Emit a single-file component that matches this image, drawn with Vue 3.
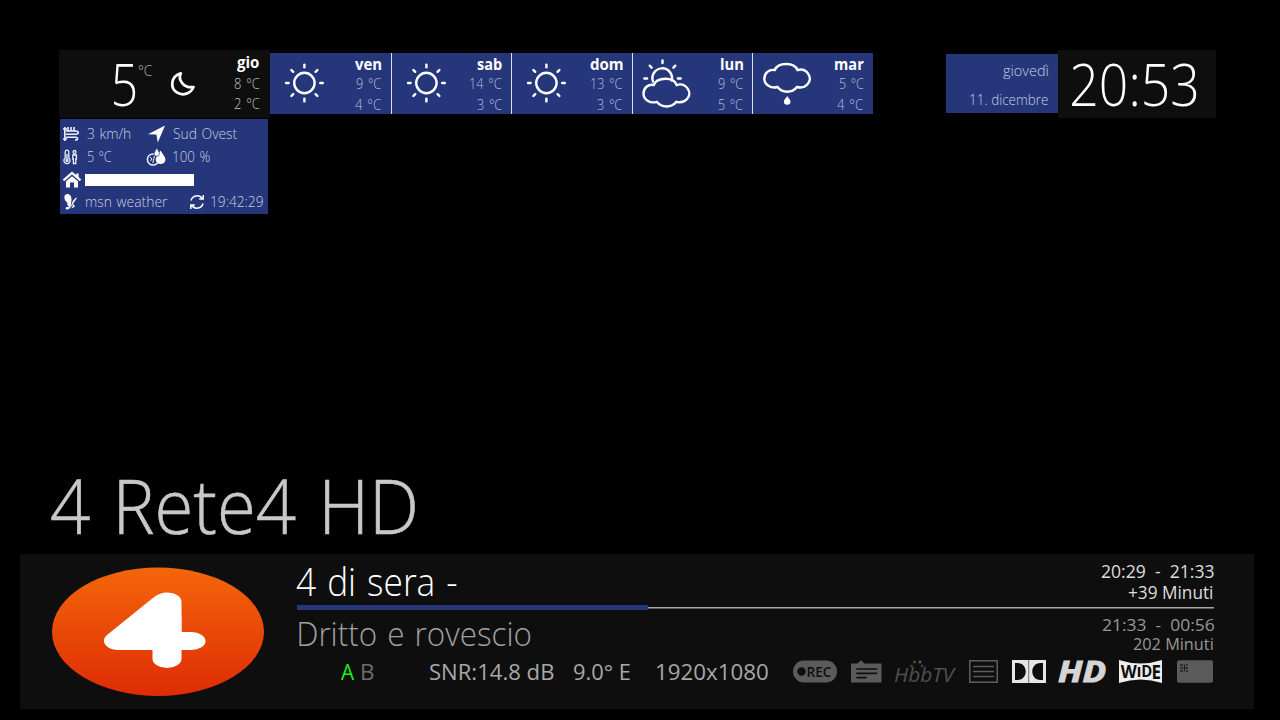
<script setup>
// Stretches a line of text so that its ink is exactly `value` pixels wide.
const ctx = document.createElement('canvas').getContext('2d')
const vFit = {
  mounted(el, { value }) {
    const cs = getComputedStyle(el)
    ctx.font = `${cs.fontStyle} ${cs.fontWeight} ${cs.fontSize} ${cs.fontFamily}`
    ctx.wordSpacing = cs.wordSpacing
    const m = ctx.measureText(el.textContent)
    const scale = value / (m.actualBoundingBoxLeft + m.actualBoundingBoxRight)
    el.style.marginRight = `${value - el.getBoundingClientRect().width}px`
    el.style.transform = `translateX(${m.actualBoundingBoxLeft * scale}px) scaleX(${scale})`
  },
}

const days = [
  { name: 'ven', nw: 26.5, hi: '9 °C', hw: 25.5, lo: '4 °C', lw: 26.5, icon: 'sun' },
  { name: 'sab', nw: 25, hi: '14 °C', hw: 32, lo: '3 °C', lw: 25.5, icon: 'sun' },
  { name: 'dom', nw: 33, hi: '13 °C', hw: 31.5, lo: '3 °C', lw: 25.5, icon: 'sun' },
  { name: 'lun', nw: 22.5, hi: '9 °C', hw: 25.5, lo: '5 °C', lw: 25, icon: 'partly' },
  { name: 'mar', nw: 28.5, hi: '5 °C', hw: 25, lo: '4 °C', lw: 26.5, icon: 'rain' },
]
const rays = [0, 45, 90, 135, 180, 225, 270, 315]
const halfRays = [180, 225, 270, 315, 360]
</script>

<template>
  <main class="screen">
    <header class="top">
      <section class="weather">
        <div class="today">
          <span v-fit="21.5" class="now">5</span>
          <span v-fit="14" class="unit">°C</span>
          <svg class="moon" width="26" height="26" viewBox="0 0 26 26">
            <path d="M10.8 2.3C7.5 9 14 17.6 23.5 16C20.8 22.6 13 25.2 7.2 21.7C-.6 17 1 5.2 10.8 2.3Z" fill="none" stroke="#fff" stroke-width="2.7" stroke-linejoin="round" />
          </svg>
          <div class="temps">
            <span v-fit="22.5" class="day gio">gio</span>
            <span v-fit="26">8 °C</span>
            <span v-fit="26">2 °C</span>
          </div>
        </div>
        <div class="details">
          <div class="row r1">
            <svg width="20" height="18" viewBox="0 0 20 18" fill="none" stroke="#eef" stroke-width="1.6">
              <path d="M2.8 2V16M1 4H5M1 14H5M6 5.5V2M9 5.5V2M12 5.5V2M4 6H13.5C17 6 17 9.2 14 9.2M4 9.2H15M4 12.2H13.5C16.5 12.2 16 15.5 13 15" />
            </svg>
            <span v-fit="44" class="c1">3 km/h</span>
            <svg class="arrow" width="18" height="18" viewBox="0 0 18 18"><path d="M17 .5L0 9.2L8.4 9.6L9.8 17.5Z" fill="#fff" /></svg>
            <span v-fit="64.5" class="c2">Sud Ovest</span>
          </div>
          <div class="row r2">
            <svg width="20" height="16" viewBox="0 0 20 16" fill="none" stroke="#eef" stroke-width="1.3">
              <path d="M3.2 9V3A1.8 1.8 0 0 1 6.8 3V9A3.1 3.1 0 1 1 3.2 9ZM5 5V11" /><circle cx="5" cy="11.5" r="1" />
              <circle cx="12.5" cy="3" r="1.5" /><path d="M10.8 6H14.4V10H13.8V14.5H11.4V10H10.8Z" />
            </svg>
            <span v-fit="25" class="c1">5 °C</span>
            <svg class="humid" width="21" height="18" viewBox="0 0 21 18">
              <circle cx="7" cy="11.5" r="5.6" fill="none" stroke="#eef" stroke-width="1.5" />
              <path d="M4 9L6 11L4.5 13M8.5 8L6.8 15" stroke="#eef" fill="none" />
              <path d="M14.5 2.5C17 6.5 19.5 9 19.5 12A5 5 0 0 1 9.7 12C9.7 9.5 12.5 6 14.5 2.5Z" fill="#fff" />
              <path d="M10.8 0C12 2.3 13.4 3.8 13.4 5.7A2.6 2.6 0 0 1 8.2 5.7C8.2 3.8 9.7 2.3 10.8 0Z" fill="#fff" stroke="#25367a" stroke-width=".7" />
            </svg>
            <span v-fit="37" class="c2">100 %</span>
          </div>
          <div class="row r3">
            <svg width="20" height="18" viewBox="0 0 20 18">
              <path d="M1.5 9.3L10 2L18.5 9.3" fill="none" stroke="#fff" stroke-width="2.2" />
              <path d="M14.2 2.5H16.6V7L14.2 5ZM10 5.2L16 10.3V16.5H12V11.5H8V16.5H4V10.3Z" fill="#fff" />
            </svg>
            <i class="mask"></i>
          </div>
          <div class="row r4">
            <svg width="20" height="18" viewBox="0 0 20 18" fill="#fff">
              <path d="M3 2C6-.5 9.8 2 9.5 7L8.5 14C5.5 14 5 11.5 5.4 9.5C3 8.5 1.5 4.5 3 2Z" />
              <path d="M15 5L10 12.5C8 15.5 6.5 17 4.5 16.5C3 16 3.5 14 5 14L8 14.2M9.5 15.5L11.5 11L13 13.5Z" />
              <path d="M14.8 5C12 6 10.5 8.5 9.7 12.3" stroke="#fff" fill="#fff" />
            </svg>
            <span v-fit="82" class="c0">msn weather</span>
            <svg class="sync" width="16" height="16" viewBox="0 0 16 16" fill="none" stroke="#fff" stroke-width="1.5">
              <path d="M2 6.5A6.2 6.2 0 0 1 13.2 4.6M14 9.5A6.2 6.2 0 0 1 2.8 11.4M14.2 1V5H10.2M1.8 15V11H5.8" />
            </svg>
            <span v-fit="52.5" class="time">19:42:29</span>
          </div>
        </div>
      </section>

      <section class="forecast">
        <div v-for="d in days" :key="d.name" class="cell">
          <svg width="62" height="61" viewBox="0 0 62 61" fill="none" stroke="#fff" stroke-linecap="round">
            <g v-if="d.icon === 'sun'" stroke-width="2.4">
              <circle cx="34.4" cy="30" r="10.2" />
              <path v-for="a in rays" :key="a" d="M15.8 0H18.4" :transform="`translate(34.4 30) rotate(${a})`" />
            </g>
            <g v-else-if="d.icon === 'partly'" stroke-width="2.4">
              <path d="M20 28.5A9.8 9.8 0 1 1 38.7 27.5" />
              <path v-for="a in halfRays" :key="a" d="M15.4 0H18.1" :transform="`translate(29.5 25.5) rotate(${a})`" />
              <path d="M20.7 32C24 24 40.5 23.5 43.7 32C53.2 29 60 40 54 46C51.5 49 47.5 49.8 43.5 48.8C38.5 55 28.7 55 23.7 48.8C17.2 51 10.3 46.5 10.5 40.5C10.5 34.8 15.2 31 20.7 32Z" />
            </g>
            <g v-else stroke-width="2.4">
              <path d="M21.8 17C25 9.3 41 8.8 44.5 17C54 14.5 60.3 25 54.5 31.3C52 34.2 48 35 44 34C39 40.3 29.5 40.3 24.5 34C18 36 11.3 31.5 11.3 25.7C11.3 20 16 16 21.8 17Z" />
              <path d="M34.2 43C35.7 45.5 37.5 46.8 37.5 48.5A3.3 3.3 0 0 1 30.9 48.5C30.9 46.8 32.7 45.5 34.2 43Z" fill="#fff" stroke="none" />
            </g>
          </svg>
          <div class="temps">
            <span v-fit="d.nw" class="day">{{ d.name }}</span>
            <span v-fit="d.hw">{{ d.hi }}</span>
            <span v-fit="d.lw">{{ d.lo }}</span>
          </div>
        </div>
      </section>

      <section class="date">
        <span v-fit="45.5">giovedì</span>
        <span v-fit="78.5">11. dicembre</span>
      </section>
      <section class="clock"><span v-fit="125">20:53</span></section>
    </header>

    <h1 class="channel"><span v-fit="364">4 Rete4 HD</span></h1>

    <section class="panel">
      <svg class="logo" width="214" height="130" viewBox="0 0 214 130">
        <defs>
          <linearGradient id="orange" x1="0" y1="0" x2="0" y2="1">
            <stop offset="0" stop-color="#f4660a" />
            <stop offset="1" stop-color="#de2c05" />
          </linearGradient>
        </defs>
        <ellipse cx="107" cy="64.7" rx="106" ry="64.2" fill="url(#orange)" />
        <rect x="101.5" y="40" width="29" height="61" rx="14.5" ry="9.5" fill="#fff" />
        <rect x="70" y="65" width="84.5" height="18" rx="14" ry="9" fill="#fff" />
        <path d="M56 68L102.5 30.5Q109 25.5 116 25.5C124 25.5 130.5 29.5 130.5 35V83H68C54.5 83 49 74 56 68Z" fill="#fff" />
      </svg>

      <div class="epg">
        <div class="line current">
          <span v-fit="160.5" class="title">4 di sera -</span>
          <div class="times">
            <span v-fit="112.5">20:29&nbsp; -&nbsp; 21:33</span>
            <span v-fit="85" class="in">+39 Minuti</span>
          </div>
        </div>
        <div class="progress"><i></i></div>
        <div class="line next">
          <span v-fit="231.5" class="title">Dritto e rovescio</span>
          <div class="times">
            <span v-fit="112">21:33&nbsp; -&nbsp; 00:56</span>
            <span v-fit="79.5" class="in">202 Minuti</span>
          </div>
        </div>
        <div class="status">
          <span v-fit="13.5" class="a">A</span>
          <span v-fit="11.5" class="b">B</span>
          <span v-fit="123.5" class="snr">SNR:14.8 dB</span>
          <span v-fit="56" class="orb">9.0° E</span>
          <span v-fit="112.5" class="res">1920x1080</span>

          <svg class="rec" width="44" height="23" viewBox="0 0 44 23">
            <rect y=".5" width="44" height="22" rx="11" fill="#5b5b5b" />
            <circle cx="8.5" cy="11.5" r="4.2" fill="#0e0e0e" />
            <text x="13.5" y="17" font-size="15" textLength="25" lengthAdjust="spacingAndGlyphs" fill="#0e0e0e" font-weight="600">REC</text>
          </svg>
          <svg class="note" width="31" height="23" viewBox="0 0 31 23">
            <path d="M0 3.5H6.5L10 .2L13.5 3.5H30.5V22.5H0Z" fill="#5b5b5b" />
            <path d="M6 9H25.5M6 13.3H25.5M6 17.6H15" stroke="#0e0e0e" stroke-width="1.7" stroke-linecap="round" />
          </svg>
          <svg class="hbb" width="62" height="24" viewBox="0 0 62 24">
            <text x="0" y="21.5" font-size="20" font-style="italic" font-weight="500" textLength="60" lengthAdjust="spacingAndGlyphs" fill="#505050">HbbTV</text>
            <circle cx="20.5" cy="2" r="1.5" fill="#315b38" /><circle cx="26" cy="2" r="1.5" fill="#6b622b" />
            <circle cx="17.5" cy="6" r="1.5" fill="#6b2c28" /><circle cx="28" cy="6" r="1.5" fill="#303c68" />
          </svg>
          <svg class="list" width="29" height="23" viewBox="0 0 29 23" fill="none" stroke="#5b5b5b">
            <rect x=".8" y=".8" width="27.4" height="21.4" stroke-width="1.6" />
            <path d="M4 6.5H25M4 11.5H25M4 16.5H25" stroke-width="1.6" />
          </svg>
          <svg class="dolby" width="34" height="23" viewBox="0 0 34 23">
            <rect width="34" height="23" fill="#e6e6e6" />
            <path d="M3 3H5.5C16.5 3 16.5 20 5.5 20H3ZM31 3H28.5C17.5 3 17.5 20 28.5 20H31Z" fill="#0e0e0e" />
            <path d="M16.7 0V23" stroke="#555" stroke-width=".8" />
          </svg>
          <svg class="hd" width="49" height="23" viewBox="0 0 49 23">
            <text x="0" y="21.7" font-size="28" font-style="italic" font-weight="700" textLength="48" lengthAdjust="spacingAndGlyphs" fill="#d5d5d5" stroke="#d5d5d5" stroke-width="1">HD</text>
          </svg>
          <svg class="wide" width="43" height="23" viewBox="0 0 43 23">
            <path d="M0 0Q21.5 7 43 0V23Q21.5 16 0 23Z" fill="#eee" />
            <g fill="#0e0e0e" font-weight="700">
              <text x="1.7" y="17.7" font-size="17" textLength="16" lengthAdjust="spacingAndGlyphs">W</text>
              <text x="17.5" y="17" font-size="15" textLength="5" lengthAdjust="spacingAndGlyphs">I</text>
              <text x="22.3" y="17.3" font-size="15.5" textLength="11" lengthAdjust="spacingAndGlyphs">D</text>
              <text x="32.5" y="18.7" font-size="19" textLength="9.5" lengthAdjust="spacingAndGlyphs">E</text>
            </g>
          </svg>
          <svg class="card" width="36" height="23" viewBox="0 0 36 23">
            <rect y=".3" width="36" height="22.4" rx="2" fill="#5b5b5b" />
            <path d="M3 5H6M3 8H6M3 11H6M7.5 4.2V11.5M8 8H11M9 4.8H11M9 11H11" stroke="#222" stroke-width="1.3" />
          </svg>
        </div>
      </div>
    </section>
  </main>
</template>

<style scoped>
.screen {
  width: 1280px;
  height: 720px;
  overflow: hidden;
  background: #000;
  color: #fff;
  font-family: "Open Sans", "Noto Sans", sans-serif;
  font-weight: 300;
}
span {
  display: inline-block;
  flex: none;
  white-space: pre;
  transform-origin: 0 50%;
}
svg { display: block; flex: none; overflow: visible; }
.top {
  display: flex;
  box-sizing: border-box;
  align-items: flex-start;
  height: 460px;
  padding: 50px 64px 0 59px;
}
.weather { width: 211px; flex: none; }
.today {
  display: flex;
  height: 68px;
  background: #0e0e0e;
}
.now { margin-left: 55px; font-size: 58px; line-height: 68px; }
.unit { margin-left: 2.5px; font-size: 15px; line-height: 40px; color: #bbb; }
.moon { margin: 21px 0 0 17.5px; }
.temps {
  display: flex;
  flex-direction: column;
  align-items: flex-end;
  margin-left: auto;
  font-size: 14px;
  line-height: 20.5px;
  word-spacing: 1.5px;
  color: #c2c2c6;
}
.today .temps { padding: 1px 10.5px 0 0; }
.day { font-size: 16px; font-weight: 700; color: #fff; }
.today .gio { line-height: 22.5px; }
.details {
  width: 207.5px;
  height: 95.5px;
  margin: 0.5px 0 0 1px;
  padding: 4.2px 0 0 3px;
  box-sizing: border-box;
  background: #25367a;
  font-size: 14px;
  word-spacing: 1px;
  color: #c8cce0;
}
.row { display: flex; align-items: center; height: 23px; line-height: 26px; }
.row svg:first-child { margin-left: -1px; }
.r3 { height: 22px; }
.c1 { margin-left: 4.5px; }
.c0 { margin-left: 4px; }
.arrow { margin-left: 17px; }
.c2 { margin-left: 7px; }
.humid { margin-left: 34px; }
.r2 .c2 { margin-left: 6px; }
.mask { width: 109.5px; height: 12px; margin: 1px 0 0 2.5px; background: #fff; }
.sync { margin-left: 20.5px; }
.time { margin-left: 6px; }
.forecast { display: flex; margin-top: 3px; }
.cell {
  display: flex;
  width: 120.6px;
  height: 61px;
  box-sizing: border-box;
  background: #25367a;
}
.cell + .cell { border-left: 1px solid #dfe1ec; }
.cell .temps { padding: 0.6px 9px 0 0; color: #b9bfd8; }
.date {
  display: flex;
  flex-direction: column;
  align-items: flex-end;
  width: 112px;
  height: 59px;
  box-sizing: border-box;
  margin: 4px 0 0 auto;
  padding: 2px 9.5px 0 0;
  background: #25367a;
  font-size: 14.5px;
  line-height: 29px;
  color: #c8cce0;
}
.clock {
  display: flex;
  width: 158px;
  height: 68px;
  box-sizing: border-box;
  padding-left: 14px;
  background: #0e0e0e;
  font-size: 58px;
  line-height: 68px;
}
.channel {
  display: flex;
  height: 94px;
  margin: 0;
  padding-left: 50.5px;
  font-size: 75.5px;
  font-weight: 300;
  word-spacing: 4px;
  line-height: 89px;
  color: #c8c8c8;
  -webkit-text-stroke: 0.6px #c8c8c8;
}
.panel {
  display: flex;
  width: 1234px;
  height: 155px;
  margin-left: 20px;
  background: #0e0e0e;
}
.logo { margin: 13px 0 0 31px; }
.epg { width: 917px; margin-left: 31.5px; padding-top: 5px; }
.line { display: flex; justify-content: space-between; }
.current { height: 46px; }
.current .title { margin-left: -0.5px; font-size: 38px; line-height: 45px; word-spacing: 2px; }
.times { display: flex; flex-direction: column; align-items: flex-end; }
.current .times { padding-top: 1.5px; font-size: 17.5px; line-height: 21px; font-weight: 400; color: #ddd; }
.times .in { translate: -1px 0; }
.progress {
  display: flex;
  align-items: center;
  height: 5px;
  background: linear-gradient(#a8a8a8, #a8a8a8) 0 50% / 100% 1.5px no-repeat;
}
.progress i { width: 351.5px; height: 5px; background: #25367a; }
.next { height: 40px; margin-top: 3px; color: #a0a0a0; }
.next .title { margin-left: 2px; font-size: 33.5px; line-height: 41px; word-spacing: 2px; }
.next .times { padding-top: 1.5px; font-size: 17px; line-height: 19.5px; font-weight: 400; color: #989898; }
.status {
  display: flex;
  margin-top: 5px;
  font-size: 21.5px;
  line-height: 27.5px;
  font-weight: 400;
  color: #a8a8a8;
}
.status svg { margin-top: 1.5px; }
.a { margin-left: 44.5px; color: #1cf01c; }
.b { margin-left: 7.5px; color: #6c6c6c; }
.snr { margin-left: 56px; }
.orb { margin-left: 21px; }
.res { margin-left: 26px; }
.rec { margin-left: 24.5px; }
.note { margin-left: 14px; }
.hbb { margin-left: 12px; }
.list { margin-left: 13px; }
.dolby { margin-left: 14px; }
.hd { margin-left: 12px; }
.wide { margin-left: 12px; }
.card { margin-left: 15px; }
</style>

<style>
body { background: #000; }
</style>
